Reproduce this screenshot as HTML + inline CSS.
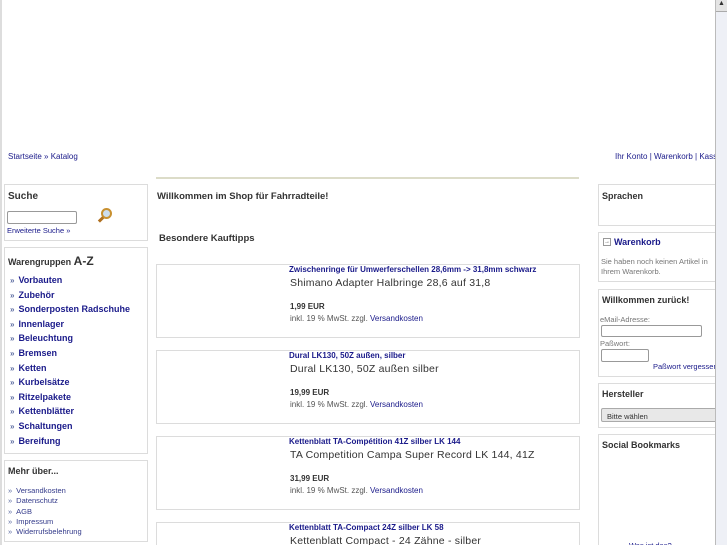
<!DOCTYPE html>
<html><head><meta charset="utf-8"><style>
*{box-sizing:border-box;margin:0;padding:0}
html,body{width:727px;height:545px;overflow:hidden}
body{background:#fff;font-family:"Liberation Sans",sans-serif;color:#333}
#w{position:relative;width:727px;height:545px;overflow:hidden}
a{color:#1a1a8a;text-decoration:none}
.box{position:absolute;border:1px solid #dcdcdc;background:#fff}
.h{font-weight:bold;font-size:10px;color:#333}
.nav div{font-size:9px;font-weight:bold;height:14.6px;color:#1a1a8a}
.nav span{color:#5a6aa0;font-size:8px;margin-right:4px}
.m div{font-size:7.5px;height:10.3px;color:#333a8a}
.m span{color:#5a6aa0;margin-right:4px}
.p{position:absolute;left:156px;width:424px;height:74px;border:1px solid #dcdcdc}
.p .t{position:absolute;left:132px;top:0px;font-size:8px;font-weight:bold;color:#1a1a8a}
.p .n{position:absolute;left:133px;top:12px;font-size:10.5px;color:#333;letter-spacing:0.2px}
.p .pr{position:absolute;left:133px;top:37px;font-size:8px;font-weight:bold;color:#333}
.p .i{position:absolute;left:133px;top:49px;font-size:8px;color:#555}
input{position:absolute;border:1px solid #999;border-radius:2px;background:#fff}
</style></head><body><div id="w">
<div style="position:absolute;left:0;top:0;width:2px;height:545px;background:#ddd"></div>
<div style="position:absolute;left:8px;top:152px;font-size:8px;color:#1a1a8a">Startseite » Katalog</div>
<div style="position:absolute;left:615px;top:152px;font-size:8px;color:#1a1a8a;white-space:nowrap">Ihr Konto | Warenkorb | Kasse</div>
<div style="position:absolute;left:156px;top:177px;width:423px;height:2px;background:#dcdcc8"></div>

<div class="box" style="left:4px;top:184px;width:144px;height:57px">
<div class="h" style="position:absolute;left:3px;top:6px">Suche</div>
<input style="left:2px;top:26px;width:70px;height:13px">
<div style="position:absolute;left:96px;top:23px;width:11px;height:11px;border:2px solid #c89030;border-radius:50%;background:#cde"></div>
<div style="position:absolute;left:93px;top:33px;width:6px;height:3px;background:#b07020;transform:rotate(-45deg)"></div>
<div style="position:absolute;left:2px;top:41px;font-size:7.5px;color:#1a1a8a">Erweiterte Suche »</div>
</div>
<div class="box" style="left:4px;top:247px;width:144px;height:207px">
<div style="position:absolute;left:3px;top:6px;font-size:9px;font-weight:bold">Warengruppen <span style="font-size:12px">A-Z</span></div>
<div class="nav" style="position:absolute;left:5px;top:27px">
<div><span>»</span>Vorbauten</div><div><span>»</span>Zubehör</div><div><span>»</span>Sonderposten Radschuhe</div><div><span>»</span>Innenlager</div><div><span>»</span>Beleuchtung</div><div><span>»</span>Bremsen</div><div><span>»</span>Ketten</div><div><span>»</span>Kurbelsätze</div><div><span>»</span>Ritzelpakete</div><div><span>»</span>Kettenblätter</div><div><span>»</span>Schaltungen</div><div><span>»</span>Bereifung</div>
</div></div>
<div class="box" style="left:4px;top:460px;width:144px;height:82px">
<div class="h" style="position:absolute;left:3px;top:5px;font-size:9px">Mehr über...</div>
<div class="m" style="position:absolute;left:3px;top:25px">
<div><span>»</span>Versandkosten</div><div><span>»</span>Datenschutz</div><div><span>»</span>AGB</div><div><span>»</span>Impressum</div><div><span>»</span>Widerrufsbelehrung</div></div>
</div>

<div class="h" style="position:absolute;left:157px;top:191px;font-size:9.5px">Willkommen im Shop für Fahrradteile!</div>
<div class="h" style="position:absolute;left:159px;top:233px;font-size:9.5px">Besondere Kauftipps</div>
<div class="p" style="top:264px"><div class="t">Zwischenringe für Umwerferschellen 28,6mm -&gt; 31,8mm schwarz</div><div class="n">Shimano Adapter Halbringe 28,6 auf 31,8</div><div class="pr">1,99 EUR</div><div class="i">inkl. 19 % MwSt. zzgl. <a>Versandkosten</a></div></div>
<div class="p" style="top:350px"><div class="t">Dural LK130, 50Z außen, silber</div><div class="n">Dural LK130, 50Z außen silber</div><div class="pr">19,99 EUR</div><div class="i">inkl. 19 % MwSt. zzgl. <a>Versandkosten</a></div></div>
<div class="p" style="top:436px"><div class="t">Kettenblatt TA-Compétition 41Z silber LK 144</div><div class="n">TA Competition Campa Super Record LK 144, 41Z</div><div class="pr">31,99 EUR</div><div class="i">inkl. 19 % MwSt. zzgl. <a>Versandkosten</a></div></div>
<div class="p" style="top:522px"><div class="t">Kettenblatt TA-Compact 24Z silber LK 58</div><div class="n">Kettenblatt Compact - 24 Zähne - silber</div></div>

<div class="box" style="left:598px;top:184px;width:130px;height:42px"><div class="h" style="position:absolute;left:3px;top:6px;font-size:9px">Sprachen</div></div>
<div class="box" style="left:598px;top:232px;width:130px;height:50px">
<div style="position:absolute;left:4px;top:5px;width:8px;height:8px;border:1px solid #999;font-size:6px;line-height:6px;text-align:center;color:#555">→</div>
<div style="position:absolute;left:15px;top:4px;font-size:9px;font-weight:bold;color:#1a1a8a">Warenkorb</div>
<div style="position:absolute;left:2px;top:24px;font-size:7.5px;color:#777;line-height:10px">Sie haben noch keinen Artikel in<br>Ihrem Warenkorb.</div></div>
<div class="box" style="left:598px;top:289px;width:130px;height:88px">
<div class="h" style="position:absolute;left:3px;top:5px;font-size:9px">Willkommen zurück!</div>
<div style="position:absolute;left:1px;top:25px;font-size:7.5px;color:#777">eMail-Adresse:</div>
<input style="left:2px;top:35px;width:101px;height:12px">
<div style="position:absolute;left:1px;top:49px;font-size:7.5px;color:#777">Paßwort:</div>
<input style="left:2px;top:59px;width:48px;height:13px">
<div style="position:absolute;left:54px;top:72px;font-size:7.5px;color:#1a1a8a;white-space:nowrap">Paßwort vergessen?</div></div>
<div class="box" style="left:598px;top:383px;width:130px;height:45px">
<div class="h" style="position:absolute;left:3px;top:5px;font-size:9px">Hersteller</div>
<div style="position:absolute;left:2px;top:24px;width:125px;height:14px;border:1px solid #aaa;border-radius:2px;background:#e8e8e8;font-size:7.5px;padding:3px 5px">Bitte wählen</div></div>
<div class="box" style="left:598px;top:434px;width:130px;height:115px">
<div class="h" style="position:absolute;left:3px;top:5px;font-size:9px">Social Bookmarks</div>
<div style="position:absolute;left:30px;top:106px;font-size:7.5px;color:#1a1a8a">Was ist das?</div></div>

<div style="position:absolute;z-index:10;left:715px;top:0;width:12px;height:545px;background:#eef0f6;border-left:1px solid #bbb"></div>
<div style="position:absolute;z-index:11;left:716px;top:0;width:11px;height:12px;background:#e4e4e4;border-bottom:1px solid #aaa;font-size:7px;text-align:center">▲</div>
</div></body></html>
